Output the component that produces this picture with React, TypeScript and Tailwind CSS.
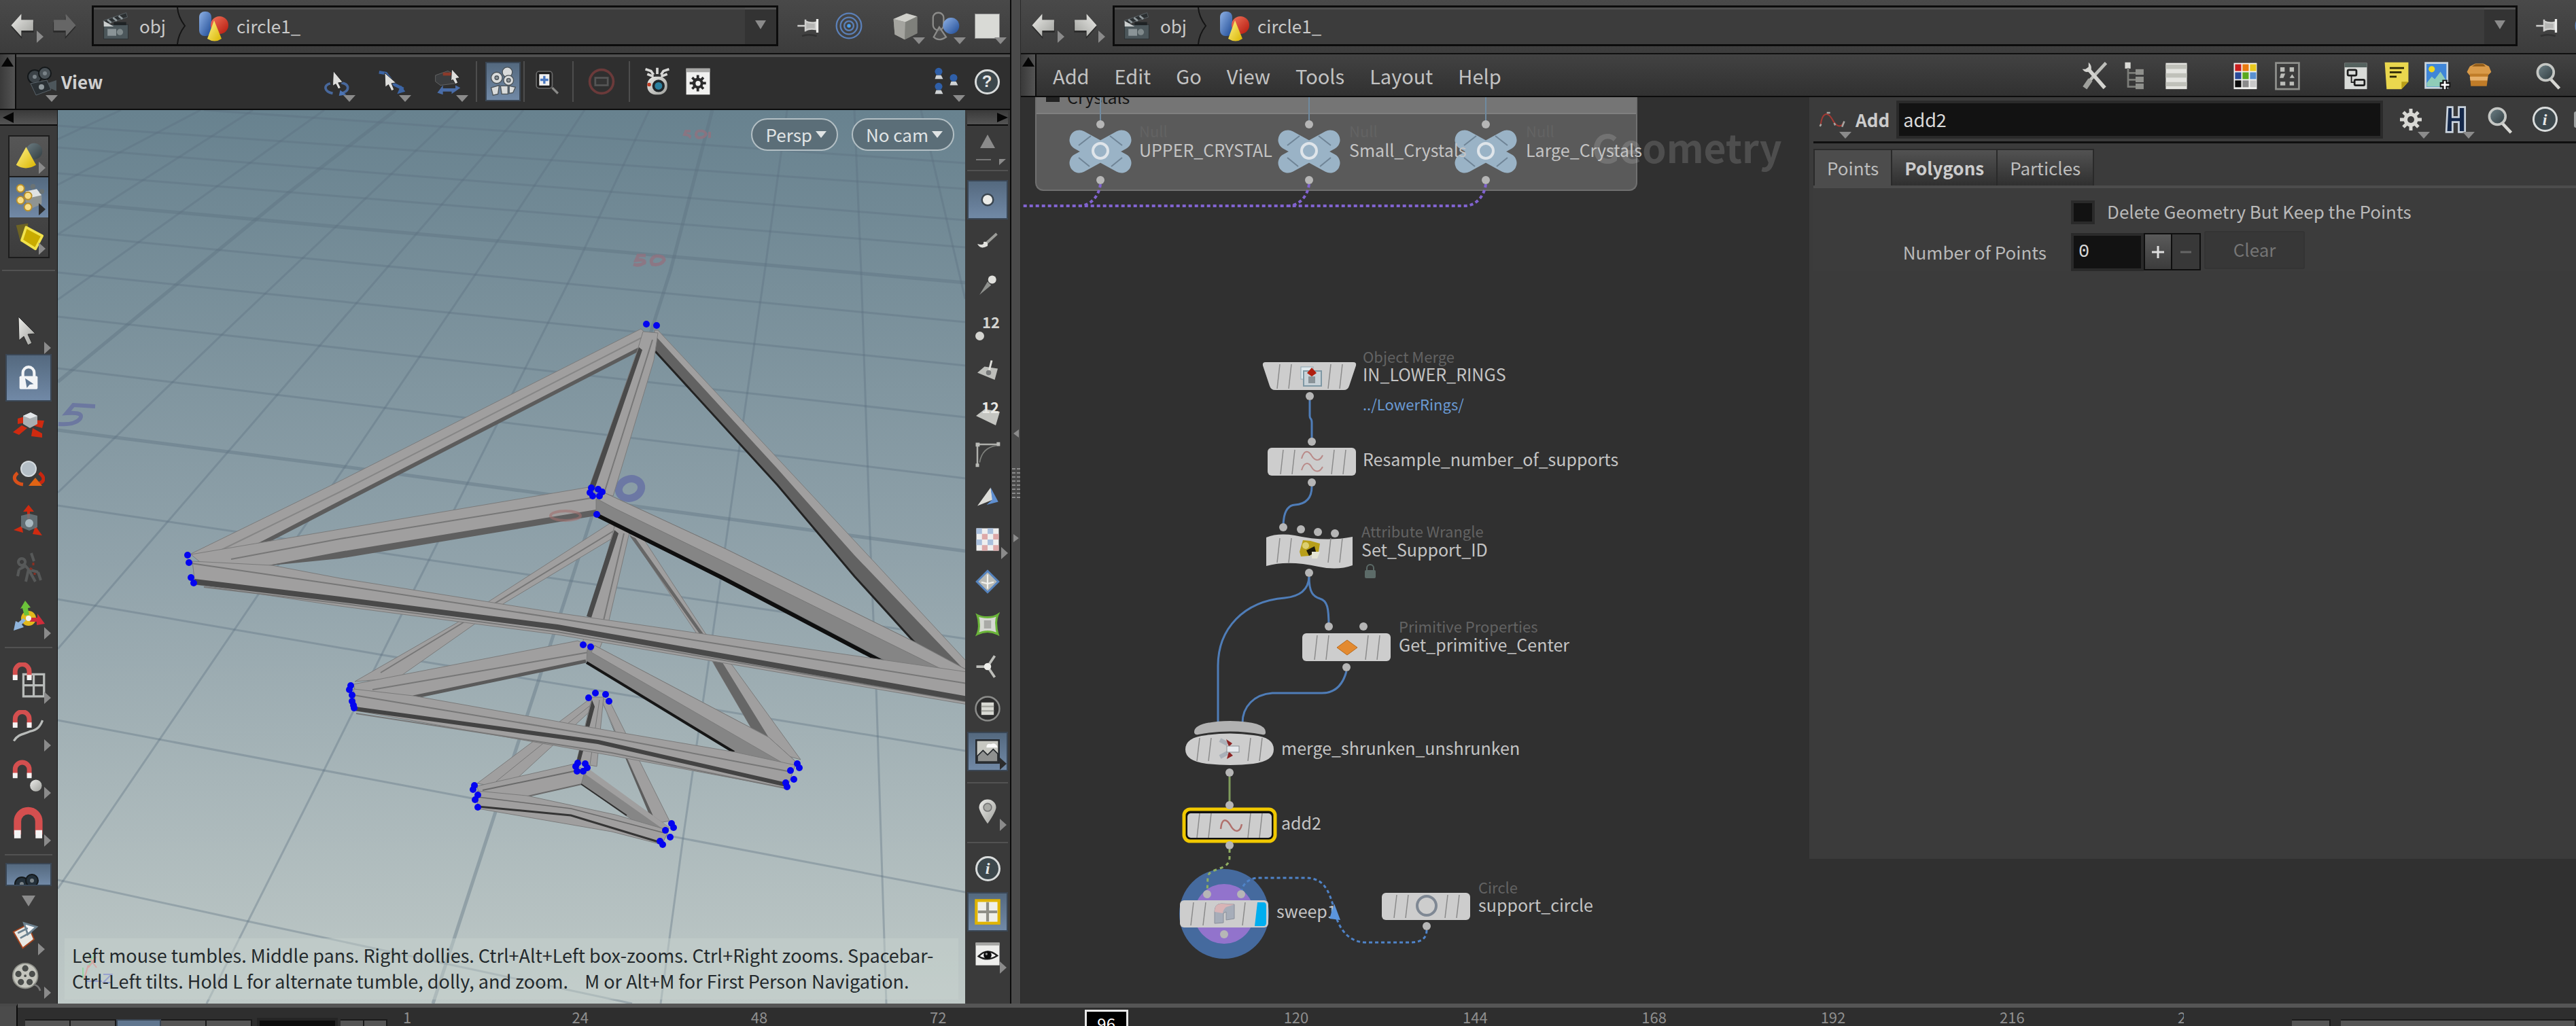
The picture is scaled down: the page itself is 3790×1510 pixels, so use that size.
import type { ReactNode } from "react";

/* ---------- shared pieces ---------- */

function SharedDefs() {
  return (
    <svg className="absolute h-0 w-0" aria-hidden="true">
      <defs>
        <linearGradient id="gLight" x1="0" y1="0" x2="1" y2="1">
          <stop offset="0" stopColor="#ecece9" />
          <stop offset="1" stopColor="#9fa09c" />
        </linearGradient>
        <linearGradient id="gBlue" x1="0" y1="0" x2="1" y2="1">
          <stop offset="0" stopColor="#8fb2e6" />
          <stop offset="1" stopColor="#1e4a94" />
        </linearGradient>
        <linearGradient id="gYellow" x1="0" y1="0" x2="1" y2="1">
          <stop offset="0" stopColor="#fff38a" />
          <stop offset="1" stopColor="#d9b400" />
        </linearGradient>
        <linearGradient id="gRed" x1="0" y1="0" x2="1" y2="1">
          <stop offset="0" stopColor="#f0745c" />
          <stop offset="1" stopColor="#b3180c" />
        </linearGradient>
        <linearGradient id="gSlate" x1="0" y1="0" x2="1" y2="1">
          <stop offset="0" stopColor="#6f8288" />
          <stop offset="1" stopColor="#2f3a3e" />
        </linearGradient>
      </defs>
    </svg>
  );
}

function Svg({ children, className = "size-11" }: { children: ReactNode; className?: string }) {
  return (
    <svg viewBox="0 0 48 48" className={`shrink-0 ${className}`} fill="none" aria-hidden="true">
      {children}
    </svg>
  );
}

function Tri({ dir, className, dark }: { dir: "down" | "right"; className: string; dark?: boolean }) {
  const fill = dark ? "#2c2c2c" : "#8b8b8b";
  return dir === "down" ? (
    <svg viewBox="0 0 18 10" className={`absolute h-[10px] w-[18px] ${className}`} aria-hidden="true">
      <path d="M0 0H18L9 10Z" fill={fill} />
    </svg>
  ) : (
    <svg viewBox="0 0 10 18" className={`absolute h-[18px] w-[10px] ${className}`} aria-hidden="true">
      <path d="M0 0V18L10 9Z" fill={fill} />
    </svg>
  );
}

function Tool({ label, className, children }: { label: string; className: string; children: ReactNode }) {
  return (
    <button type="button" aria-label={label} className={`relative flex shrink-0 items-center justify-center ${className}`}>
      {children}
    </button>
  );
}

/* ---------- icons ---------- */

const ArrowLeft = ({ flip, dim }: { flip?: boolean; dim?: boolean }) => (
  <Svg className={flip ? "size-[42px] -scale-x-100" : "size-[42px]"}>
    <path d="M4 26L22 8V18H42V35H22V46Z" fill="#000" opacity=".35" />
    <path d="M4 23L21 4V14H41V32H21V42Z" fill={dim ? "#666666" : "url(#gLight)"} />
  </Svg>
);

const Clapper = () => (
  <Svg>
    <path d="M3 16L40 3L42 10L6 22Z" fill="#2b2f31" stroke="#5b6468" />
    <path d="M10 14l6 5M19 11l6 5M28 8l6 5" stroke="#8f989b" strokeWidth="3" />
    <rect x="4" y="22" width="39" height="23" fill="#4c575b" stroke="#2a2f31" />
    <path d="M4 16L20 25H4Z" fill="#c9cdcd" />
    <path d="M20 18h20v5H20z" fill="#1f2325" />
    <rect x="10" y="29" width="14" height="11" fill="#8a9497" />
    <circle cx="30" cy="34" r="5" fill="#7f898b" />
  </Svg>
);

const Blobs = () => (
  <Svg className="size-12">
    <rect x="3" y="3" width="18" height="36" rx="8" fill="url(#gBlue)" />
    <circle cx="33" cy="23" r="13" fill="url(#gRed)" />
    <path d="M25 16L36 43Q26 50 15 43Z" fill="url(#gYellow)" />
  </Svg>
);

const Pin = () => (
  <Svg className="size-10">
    <path d="M4 24H18M18 13V34M18 16Q26 20 36 18V30Q26 28 18 32Z" stroke="#d0d0ce" strokeWidth="3" fill="#b5b5b3" />
    <path d="M39 12V36" stroke="#eeeeec" strokeWidth="4" />
    <path d="M12 42Q24 38 38 42" stroke="#222" strokeWidth="3" opacity=".5" />
  </Svg>
);

const Target = () => (
  <Svg>
    <circle cx="24" cy="24" r="20" stroke="#5b80b8" strokeWidth="2.5" />
    <circle cx="24" cy="24" r="13.500" stroke="#5b80b8" strokeWidth="2.5" />
    <circle cx="24" cy="24" r="7.500" stroke="#5b80b8" strokeWidth="2.5" />
    <circle cx="24" cy="24" r="3" fill="#4aa0f0" />
  </Svg>
);

const Cube = () => (
  <Svg>
    <path d="M5 13L26 4L43 9V36L23 46L7 38Z" fill="#8d8d88" />
    <path d="M5 13L26 4L43 9L24 18Z" fill="#cfcfca" />
    <path d="M5 13L24 18L23 46L7 38Z" fill="#a4a49f" />
    <path d="M24 18L43 9V36L23 46Z" fill="#7f807b" />
  </Svg>
);

const Shapes = () => (
  <Svg>
    <rect x="3" y="3" width="17" height="28" rx="8" stroke="#8c8c8a" strokeWidth="2.500" />
    <circle cx="32" cy="24" r="13" fill="url(#gBlue)" />
    <path d="M13 26L24 42Q12 50 4 42Z" stroke="#8c8c8a" strokeWidth="2.500" fill="#55555599" />
  </Svg>
);

const FilmCamera = ({ dark }: { dark?: boolean }) => (
  <Svg className="size-12">
    <circle cx="14" cy="17" r="10" fill={dark ? "#24303a" : "#3b4247"} stroke="#14181a" strokeWidth="2" />
    <circle cx="29" cy="12" r="9" fill={dark ? "#24303a" : "#4a5257"} stroke="#14181a" strokeWidth="2" />
    <circle cx="14" cy="17" r="3" fill="#7a8388" />
    <circle cx="29" cy="12" r="3" fill="#7a8388" />
    <path d="M8 27L32 22L38 36L16 44Z" fill="#2a3034" stroke="#59636a" />
    <path d="M34 26L46 22V38L37 34Z" fill="#4d565b" />
    <circle cx="24" cy="32" r="4" fill="#8f989c" />
  </Svg>
);

const Tumble = () => (
  <Svg>
    <path d="M14 27C3 30 4 40 18 43M32 26C45 28 46 39 32 43" stroke="#48689c" strokeWidth="4" />
    <path d="M30 38L40 45L28 47Z" fill="#4c74b4" />
    <path d="M19 7L34 25L27 26L31 34L27 36L23 28L18 31Z" fill="#dededc" stroke="#222" />
  </Svg>
);
const PanTool = () => (
  <Svg>
    <path d="M3 9L14 11L28 29L42 36" stroke="#3d65a4" strokeWidth="5" />
    <path d="M32 44L45 40L38 30Z" fill="#3d65a4" />
    <path d="M12 10L30 26L23 27L27 37L23 39L18 29L13 33Z" fill="#dededc" stroke="#222" />
  </Svg>
);
const DollyTool = () => (
  <Svg>
    <path d="M4 14L24 7L36 14V27L12 30L4 24Z" fill="#3b3d3f" stroke="#666" />
    <path d="M16 12h14" stroke="#8c3a2a" strokeWidth="5" />
    <path d="M7 42L16 30V35H36V30L44 34L30 44V40H16V45Z" fill="#4a6da8" />
    <path d="M30 4L43 18L37 19L40 26L36 28L32 21L29 23Z" fill="#dededc" stroke="#222" />
  </Svg>
);
const Walk = () => (
  <Svg>
    <g fill="#d9dbdb" stroke="#4b5358" strokeWidth="1.500">
      <circle cx="31" cy="9" r="8" />
      <circle cx="14" cy="18" r="9" />
      <circle cx="33" cy="22" r="8" />
      <circle cx="14" cy="18" r="3" fill="#8d9498" />
      <circle cx="33" cy="22" r="3" fill="#8d9498" />
      <path d="M5 34L18 30L16 44L8 46Z" />
      <path d="M20 31H32V44H22Z" />
      <path d="M34 31L44 33L40 42L34 43Z" />
    </g>
  </Svg>
);
const ZoomBox = () => (
  <Svg className="size-10">
    <rect x="5" y="6" width="28" height="30" rx="5" fill="#1f1f1f" stroke="#6b6b6b" strokeWidth="2" />
    <rect x="10" y="11" width="18" height="20" fill="#f0f0f0" />
    <path d="M19 14V28M12 21H26" stroke="#4a78c0" strokeWidth="4" />
    <path d="M33 35L43 45" stroke="#8a8a88" strokeWidth="4" />
  </Svg>
);
const NoEntry = () => (
  <Svg>
    <circle cx="24" cy="24" r="19" stroke="#6b3a3a" strokeWidth="4" />
    <rect x="14" y="18" width="20" height="12" fill="#333" stroke="#555" strokeWidth="3" />
  </Svg>
);
const PhotoCamera = () => (
  <Svg>
    <path d="M5 4l9 3 4 6M43 4l-9 3-4 6M24 2V12M8 12l10 4M40 12l-10 4" stroke="#d8d8d6" strokeWidth="4" />
    <rect x="8" y="16" width="32" height="29" rx="13" fill="url(#gLight)" />
    <circle cx="26" cy="31" r="10" fill="#20262a" />
    <circle cx="26" cy="31" r="6" fill="#2b7f9e" />
    <circle cx="11" cy="29" r="3" fill="#c23b22" />
  </Svg>
);
const Gear = ({ color = "#2b2b2b" }: { color?: string }) => (
  <g stroke={color} strokeWidth="5">
    <path d="M24 8V40M8 24H40M13 13L35 35M35 13L13 35" />
    <circle cx="24" cy="24" r="8" fill="none" strokeWidth="5" />
  </g>
);
const GearPanel = () => (
  <Svg>
    <rect x="5" y="3" width="38" height="42" fill="#f1f1ef" />
    <rect x="5" y="3" width="38" height="6" fill="#a9a9a7" />
    <g transform="translate(4 7) scale(.82)">
      <Gear />
    </g>
    <circle cx="24" cy="27" r="4" fill="#f1f1ef" />
  </Svg>
);
const People = () => (
  <Svg>
    {[
      [12, 6],
      [36, 16],
      [12, 30],
    ].map(([x, y]) => (
      <g key={`${x}-${y}`}>
        <circle cx={x} cy={y + 2} r="6" fill="#2f5fa8" />
        <path d={`M${x - 6} ${y + 14}H${x + 7}L${x + 4} ${y + 8}H${x - 4}Z`} fill="#cfd2d4" />
      </g>
    ))}
  </Svg>
);
const Badge = ({ char, italic }: { char: string; italic?: boolean }) => (
  <span
    className={`flex size-[37px] items-center justify-center rounded-full border-[3px] border-[#d9dcdc] bg-[#3c474c] text-[24px] leading-[24px] font-bold text-[#e6e8e8] ${
      italic ? "font-['Liberation_Serif'] italic" : "font-['Liberation_Sans']"
    }`}
  >
    {char}
  </span>
);
const Magnifier = () => (
  <Svg>
    <path d="M28 30L42 45" stroke="#d8d8d4" strokeWidth="5" />
    <circle cx="20" cy="19" r="13" fill="url(#gSlate)" stroke="#c5c7c4" strokeWidth="4" />
  </Svg>
);

/* left shelf icons */
const SelectObjects = () => (
  <Svg>
    <circle cx="32" cy="16" r="13" fill="url(#gSlate)" opacity=".9" />
    <path d="M19 9L35 38Q18 48 3 38Z" fill="url(#gYellow)" />
  </Svg>
);
const SelectPoints = () => (
  <Svg>
    <path d="M18 14L36 10L44 22V34L26 42L18 30Z" fill="#8f9492" />
    <path d="M18 14L36 10L44 20L26 24Z" fill="#dfe2e2" />
    {[
      [10, 9],
      [22, 21],
      [10, 28],
      [22, 39],
    ].map(([x, y]) => (
      <circle key={`${x}-${y}`} cx={x} cy={y} r="6" fill="#f6de8a" stroke="#b98f2a" strokeWidth="2" />
    ))}
    <circle cx="30" cy="6" r="4" fill="#6b7375" />
    <circle cx="44" cy="14" r="4" fill="#6b7375" />
  </Svg>
);
const SelectPrims = () => (
  <Svg>
    <path d="M3 5L22 2V30L10 32Z" fill="#8a7a10" opacity=".6" />
    <path d="M19 8L45 22L34 43L12 29Z" fill="#c9ab00" stroke="#f2e34c" strokeWidth="4" strokeLinejoin="round" />
  </Svg>
);
const SelectCursor = () => (
  <Svg className="size-12">
    <path d="M9 4L34 29L23 30L29 43L23 46L17 33L10 39Z" fill="url(#gLight)" stroke="#2c2c2c" />
  </Svg>
);
const SecureLock = () => (
  <Svg className="size-10">
    <path d="M14 22V15a10 10 0 0 1 20 0V22" stroke="#f2f4f6" strokeWidth="5" />
    <rect x="8" y="21" width="32" height="23" rx="2" fill="#f2f4f6" />
    <path d="M18 25L33 35L26 36L21 42Z" fill="#5f7691" />
  </Svg>
);
const MoveTool = () => (
  <Svg className="size-12">
    <path d="M8 14L22 10L20 20L8 22ZM28 16L47 17L44 28L30 24ZM1 34L14 24L22 28L10 38ZM30 28L44 36V42L28 40Z" fill="#cf2a10" />
    <path d="M16 10L27 5L37 10V22L26 28L16 22Z" fill="#a9afb2" />
    <path d="M16 10L27 5L37 10L26 14Z" fill="#e3e7ea" />
  </Svg>
);
const RotateTool = () => (
  <Svg className="size-12">
    <path d="M8 24C-2 32 6 40 16 41" stroke="#d8501a" strokeWidth="5" />
    <path d="M40 24C50 32 46 38 38 40" stroke="#c8260f" strokeWidth="5" />
    <path d="M24 43L34 31L44 43Z" fill="#e06414" />
    <circle cx="24" cy="18" r="11" fill="#b4bec6" stroke="#d4dade" strokeWidth="2" />
  </Svg>
);
const ScaleTool = () => (
  <Svg className="size-12">
    <path d="M24 1L32 11H16ZM22 11h4v10h-4zM2 38L14 32L16 42ZM34 32L44 46L30 44Z" fill="#cf2a10" />
    <path d="M13 17L25 14L37 17V34L25 39L13 34Z" fill="#6a787e" opacity=".85" />
    <circle cx="25" cy="28" r="6" fill="#a9b9c0" />
  </Svg>
);
const PoseTool = () => (
  <Svg className="size-12">
    <path
      d="M28 2L32 14M14 10a5 5 0 1 0 .1 0M17 18L24 26L20 44M24 26L38 30M10 26L18 22M10 26L8 36M24 26L34 44M38 30L42 42"
      stroke="#575959"
      strokeWidth="4"
    />
    <path d="M31 16v4M26 24l3 2M33 31v3" stroke="#8a2f22" strokeWidth="3" />
  </Svg>
);
const HandlesTool = () => (
  <Svg className="size-12">
    <circle cx="24" cy="28" r="11" fill="#e2b91c" />
    <path d="M18 24L15 13L12 14L19 2L27 12L23 13L25 23Z" fill="#6cc23a" />
    <path d="M26 27L37 27V21L48 36L36 38V33H26Z" fill="#d02c3a" />
    <path d="M20 31L14 37L17 41L2 46L5 32L9 34L16 28Z" fill="#8fb4dc" />
    <circle cx="24" cy="28" r="4" fill="#f3f3ee" />
  </Svg>
);
const MagnetShape = () => (
  <>
    <path d="M6 32V20a12 12 0 0 1 24 0V32" stroke="#d44f4f" strokeWidth="8" />
    <path d="M6 26V35M30 26V35" stroke="#f4f4f4" strokeWidth="8" />
  </>
);
const MagnetGrid = () => (
  <Svg className="size-13">
    <path d="M17 16H45V46H17ZM31 16V46M17 31H45" stroke="#b9bcba" strokeWidth="3" />
    <g transform="translate(1 -4) scale(.8)">
      <MagnetShape />
    </g>
  </Svg>
);
const MagnetCurve = () => (
  <Svg className="size-13">
    <g transform="translate(1 -4) scale(.8)">
      <MagnetShape />
    </g>
    <path d="M4 42C10 32 18 33 26 29C36 27 40 22 43 14" stroke="#b9bcba" strokeWidth="3" />
  </Svg>
);
const MagnetPoint = () => (
  <Svg className="size-13">
    <g transform="translate(1 0) scale(.8)">
      <MagnetShape />
    </g>
    <circle cx="34" cy="38" r="8" fill="url(#gLight)" />
  </Svg>
);
const MagnetBig = () => (
  <Svg className="size-13">
    <path d="M9 40V22a14 14 0 0 1 29 0V40" stroke="#d44f4f" strokeWidth="10" />
    <path d="M9 34V45M38 34V45" stroke="#f4f4f4" strokeWidth="9" />
  </Svg>
);
const Card = () => (
  <Svg>
    <path d="M3 18L26 6L36 30L18 44Z" fill="#e8e8e4" stroke="#a4441e" strokeWidth="2" />
    <path d="M10 20L26 12M14 28L32 18M20 4L40 10L26 22Z" stroke="#6d8290" strokeWidth="3" fill="#f4f6f8" />
  </Svg>
);
const Reel = () => (
  <Svg>
    <circle cx="22" cy="22" r="20" fill="#c4c5bd" stroke="#8d8f88" strokeWidth="2" />
    <g fill="#4a4d4b">
      <circle cx="22" cy="10" r="5" />
      <circle cx="11" cy="19" r="5" />
      <circle cx="33" cy="19" r="5" />
      <circle cx="15" cy="32" r="5" />
      <circle cx="29" cy="32" r="5" />
      <circle cx="22" cy="22" r="2" />
    </g>
    <path d="M36 36Q44 38 46 46" stroke="#777" strokeWidth="3" />
  </Svg>
);

/* display option icons */
const DotIcon = () => (
  <Svg className="size-10">
    <circle cx="24" cy="24" r="10" fill="#ecece8" stroke="#3b4650" strokeWidth="3" />
  </Svg>
);
const BrushIcon = () => (
  <Svg className="size-9">
    <path d="M20 28L42 8" stroke="#9b9c98" strokeWidth="5" />
    <path d="M4 28Q10 40 24 32Q26 22 16 24Q18 32 4 28Z" fill="#e2e2de" />
  </Svg>
);
const NormalIcon = () => (
  <Svg className="size-9">
    <path d="M8 44L24 18L31 25Z" fill="#8f918e" />
    <circle cx="33" cy="14" r="8" fill="#e0e0dc" />
  </Svg>
);
const PointNumbers = () => (
  <span className="relative block h-10 w-9">
    <span className="absolute top-0 left-[10px] text-[22px] leading-[24px] font-bold text-[#d4d4d0]">12</span>
    <span className="absolute bottom-0 left-0 size-[13px] rounded-full bg-[#d4d4d0]" />
  </span>
);
const PrimNormal = () => (
  <Svg className="size-9">
    <path d="M4 30L18 18L44 22L38 44Z" fill="#bdbeba" />
    <path d="M26 30L32 6" stroke="#e0e0dc" strokeWidth="4" />
    <circle cx="26" cy="30" r="5" fill="#77797a" />
  </Svg>
);
const PrimNumbers = () => (
  <span className="relative block h-10 w-9">
    <svg viewBox="0 0 36 40" className="absolute inset-0 h-10 w-9" aria-hidden="true">
      <path d="M1 26L14 16L36 20L30 40Z" fill="#c4c5c1" />
    </svg>
    <span className="absolute top-0 left-[9px] text-[22px] leading-[24px] font-bold text-[#e8e8e4]">12</span>
  </span>
);
const HullIcon = () => (
  <Svg className="size-10">
    <path d="M6 5V44M6 6H44" stroke="#aeafab" strokeWidth="3" />
    <path d="M10 38Q14 12 40 8" stroke="#7d7f7b" strokeWidth="2" />
    <path d="M3 3h7v7H3zM40 2h6v7h-6zM3 40h6v6H3z" fill="#b9bab6" />
  </Svg>
);
const PrismIcon = () => (
  <Svg className="size-9">
    <path d="M4 42L30 6L34 30Z" fill="#dcdcd8" />
    <path d="M30 6L45 34L22 40L33 30Z" fill="#5f8fd0" />
  </Svg>
);
const CheckerIcon = () => (
  <Svg className="size-9">
    <rect x="2" y="2" width="44" height="44" fill="#efefef" />
    {[0, 1, 2, 3].map((r) =>
      [0, 1, 2, 3].map((c) =>
        (r + c) % 2 === 0 ? (
          <rect key={`${r}-${c}`} x={2 + c * 11} y={2 + r * 11} width="11" height="11" fill={r % 2 ? "#dda9a9" : "#a9bfdd"} />
        ) : null,
      ),
    )}
  </Svg>
);
const DiamondIcon = () => (
  <Svg className="size-9">
    <path d="M24 3L45 24L24 45L3 24Z" fill="#b9bab5" stroke="#5583bd" strokeWidth="4" />
    <path d="M24 10L24 38M12 25L24 28L36 25" stroke="#f2f2ee" strokeWidth="3" />
  </Svg>
);
const GreenBox = () => (
  <Svg className="size-9">
    <path
      d="M4 6Q12 10 24 10Q36 10 44 5Q40 14 41 24Q41 34 44 43Q34 38 24 38Q14 38 4 43Q8 34 7 24Q7 14 4 6Z"
      fill="#d6d8d2"
      stroke="#6bb53a"
      strokeWidth="4"
    />
    <rect x="17" y="16" width="14" height="16" fill="#a9aaa6" />
  </Svg>
);
const SpokesIcon = () => (
  <Svg className="size-9">
    <path d="M2 24H24M24 24L38 3M24 24L38 45" stroke="#bdbeba" strokeWidth="5" />
    <circle cx="24" cy="24" r="7" fill="#efefeb" />
  </Svg>
);
const ListCircle = () => (
  <Svg className="size-10">
    <circle cx="24" cy="24" r="21" stroke="#8b8c8a" strokeWidth="3" fill="#2e2e2e" />
    <rect x="13" y="13" width="22" height="22" fill="#d9dad4" />
    <path d="M13 20H35M13 28H35" stroke="#a8a9a3" strokeWidth="3" />
  </Svg>
);
const PictureIcon = () => (
  <Svg className="size-10">
    <rect x="4" y="4" width="40" height="40" fill="#c6c7c1" stroke="#23272b" strokeWidth="3" />
    <path d="M6 32L16 22L24 30L34 20L42 28V42H6Z" fill="#8f9190" stroke="#23272b" strokeWidth="2" />
    <path d="M22 17Q22 9 30 11Q38 7 42 17Z" fill="#fafafa" />
  </Svg>
);
const MarkerIcon = () => (
  <Svg className="size-10">
    <path d="M24 46Q9 24 9 17a15 14 0 0 1 30 0Q39 24 24 46Z" fill="url(#gLight)" />
    <circle cx="24" cy="17" r="7" fill="#a9aaa6" stroke="#777" strokeWidth="2" />
  </Svg>
);
const QuadIcon = () => (
  <Svg className="size-10">
    <rect x="4" y="4" width="40" height="40" fill="#efefe8" stroke="#e0b400" strokeWidth="5" />
    <path d="M24 7V41M7 24H41" stroke="#8f8f86" strokeWidth="5" />
  </Svg>
);
const EyeIcon = () => (
  <Svg className="size-10">
    <rect x="3" y="4" width="42" height="40" fill="#eeeeec" />
    <rect x="3" y="4" width="42" height="5" fill="#a5a5a3" />
    <path d="M8 28Q24 12 41 27Q24 38 8 28Z" fill="#fff" stroke="#222" strokeWidth="3" />
    <circle cx="24" cy="26" r="7" fill="#0c0c0c" />
    <circle cx="22" cy="24" r="2" fill="#999" />
  </Svg>
);

/* network menu icons */
const Wrench = () => (
  <Svg>
    <path d="M42 4L16 32" stroke="#bdbeba" strokeWidth="5" />
    <path d="M17 31L8 44" stroke="#9fa09c" strokeWidth="8" />
    <path d="M12 12L40 44" stroke="#d4d4d0" strokeWidth="6" />
    <path d="M4 14Q10 22 18 16Q20 8 14 3V11L9 14Z" fill="#d4d4d0" />
  </Svg>
);
const TreeIcon = () => (
  <Svg>
    <rect x="7" y="3" width="9" height="10" fill="#dadad6" />
    <path d="M12 12V42H26M12 20H26M12 31H26" stroke="#7c7d79" strokeWidth="3" />
    <rect x="24" y="14" width="13" height="9" fill="#8f908c" />
    <rect x="24" y="26" width="13" height="9" fill="#8f908c" />
    <rect x="24" y="37" width="13" height="9" fill="#8f908c" />
  </Svg>
);
const ListIcon = () => (
  <Svg>
    <rect x="7" y="4" width="34" height="42" fill="#e4e4e0" />
    <path d="M7 10H41M7 24H41M7 38H41" stroke="#c0c1ba" strokeWidth="7" />
  </Svg>
);
const swatches = ["#c81e1e", "#e87a10", "#e8c81e", "#2a4a98", "#5aa81e", "#5a90d0", "#0c0c0c", "#8a8a8a", "#c8c8c8"];
const PaletteIcon = () => (
  <Svg>
    <rect x="6" y="4" width="37" height="42" fill="#f4f4f2" />
    {swatches.map((c, i) => (
      <rect key={c} x={8 + (i % 3) * 12} y={6 + Math.floor(i / 3) * 13} width="10" height="11" fill={c} />
    ))}
  </Svg>
);
const ShapesPalette = () => (
  <Svg>
    <rect x="6" y="4" width="37" height="42" fill="#3c3c3c" stroke="#8f908c" strokeWidth="3" />
    <path d="M13 11h7v7h-7zM28 11h7v7h-7zM14 21h7l-3 7h-6zM28 28l4-6 4 6zM13 34h8v6h-8zM28 34h7v6h-7z" fill="#bcbdb9" />
  </Svg>
);
const NetIcon = () => (
  <Svg>
    <rect x="6" y="4" width="36" height="42" fill="#d9dbd8" />
    <rect x="6" y="4" width="36" height="7" fill="#55625f" />
    <rect x="11" y="15" width="14" height="9" rx="2" stroke="#1d1d1d" strokeWidth="3" />
    <rect x="22" y="31" width="16" height="9" rx="2" stroke="#1d1d1d" strokeWidth="3" />
    <path d="M17 25V35H22" stroke="#1d1d1d" strokeWidth="2" />
  </Svg>
);
const NoteIcon = () => (
  <Svg>
    <path d="M5 3H43V34L32 46H8Z" fill="#ead74e" />
    <path d="M43 34H32V46Z" fill="#b99f18" />
    <path d="M13 12H36M13 19H32M13 26H24" stroke="#2b2606" strokeWidth="3" />
  </Svg>
);
const AddImageIcon = () => (
  <Svg>
    <rect x="5" y="4" width="35" height="40" fill="#3f86d8" stroke="#c9d4dc" strokeWidth="3" />
    <circle cx="15" cy="14" r="5" fill="#f0d81e" />
    <path d="M7 36L15 26L20 30L29 18L38 32V42H7Z" fill="#8fccb8" />
    <path d="M36 31V47M28 39H45" stroke="#111" strokeWidth="8" />
    <path d="M36 33V46M30 39H43" stroke="#fff" strokeWidth="3" />
  </Svg>
);
const BoxIcon = () => (
  <Svg className="size-10">
    <path d="M8 8L18 3H32L42 8L46 18L40 24H8L3 18Z" fill="#d99a48" />
    <path d="M8 21H41L38 43H10Z" fill="#c07c28" />
    <path d="M8 26H40L39 33H9Z" fill="#e6b06a" />
    <path d="M12 8H36L32 4H18Z" fill="#8f5a18" />
  </Svg>
);
const CurveIcon = () => (
  <Svg className="size-10">
    <path d="M3 34C6 10 16 10 24 24C30 36 40 40 44 28" stroke="#a23a34" strokeWidth="2.500" />
    <path d="M2 36l2-4M14 12h6M27 30l2 4M41 37l4-10" stroke="#a5a6a2" strokeWidth="3" />
  </Svg>
);

/* ---------- chrome ---------- */

function PathBar({ forward, children }: { forward: boolean; children: ReactNode }) {
  return (
    <div className="flex h-[80px] shrink-0 items-start border-b-2 border-[#101010] bg-gradient-to-b from-[#494949] to-[#3c3c3c] pt-2">
      <Tool label="Back" className="ml-1 h-[60px] w-[60px]">
        <ArrowLeft />
        <Tri dir="right" className="right-0 bottom-[5px]" />
      </Tool>
      <Tool label="Forward" className="mr-[11px] h-[60px] w-[60px]">
        <ArrowLeft flip dim={!forward} />
        {forward && <Tri dir="right" className="right-0 bottom-[5px]" />}
      </Tool>
      <nav
        aria-label="Path"
        className="flex h-[60px] min-w-0 flex-1 items-stretch border-[3px] border-[#0c0c0c] bg-[#3c3c3c] shadow-[inset_0_3px_0_#4f4f4f]"
      >
        <a href="#obj" className="flex items-center gap-3 pl-[11px] text-[26px] leading-[32px] text-[#c9c9c9]">
          <Clapper />
          <span>obj</span>
        </a>
        <svg viewBox="0 0 14 54" className="ml-4 h-full w-[14px]" preserveAspectRatio="none" fill="none" aria-hidden="true">
          <path d="M1 0Q2 14 12 27Q2 40 1 54" stroke="#141414" strokeWidth="2" />
        </svg>
        <a href="#circle1" className="flex items-center gap-[10px] pl-4 text-[26px] leading-[32px] text-[#c9c9c9]">
          <Blobs />
          <span>circle1_</span>
        </a>
        <button
          type="button"
          aria-label="Path history"
          className="ml-auto flex w-[46px] items-center justify-center bg-[#333333] shadow-[inset_0_3px_0_#555555]"
        >
          <svg viewBox="0 0 16 13" className="mb-1 h-[13px] w-4" aria-hidden="true">
            <path d="M0 0H16L8 13Z" fill="#8b8b8b" />
          </svg>
        </button>
      </nav>
      {children}
    </div>
  );
}

function CollapseTab({ className }: { className: string }) {
  return (
    <button
      type="button"
      aria-label="Collapse toolbar"
      className={`flex shrink-0 justify-center border-r-2 border-[#0c0c0c] bg-gradient-to-r from-[#3a3a3a] to-[#545454] ${className}`}
    >
      <svg viewBox="0 0 18 14" className="mt-1 h-[14px] w-[18px]" aria-hidden="true">
        <path d="M9 0L18 14H0Z" fill="#050505" />
      </svg>
    </button>
  );
}

const VRule = ({ className }: { className: string }) => <span className={`h-[60px] w-[2px] shrink-0 bg-[#4d4d4d] ${className}`} />;
const HRule = ({ className }: { className: string }) => <span className={`block h-[2px] shrink-0 bg-[#525252] ${className}`} />;

const activeBtn = "border-2 border-[#3a4654] bg-gradient-to-b from-[#54697f] to-[#7189a6]";

function ViewToolbar() {
  return (
    <div className="flex h-[82px] shrink-0 items-center border-b-2 border-[#0c0c0c] bg-[#2f2f2f] shadow-[inset_0_4px_0_#4f4f4f]">
      <CollapseTab className="h-full w-6" />
      <Tool label="View tool" className="ml-2 h-full w-[58px]">
        <FilmCamera />
        <Tri dir="down" className="right-[5px] bottom-[10px]" />
      </Tool>
      <span className="w-[364px] text-[26px] leading-[32px] font-bold text-[#d0d0d0]">View</span>
      <Tool label="Tumble" className="h-full w-[82px]">
        <Tumble />
        <Tri dir="down" className="right-[13px] bottom-[10px]" />
      </Tool>
      <Tool label="Pan" className="h-full w-[82px]">
        <PanTool />
        <Tri dir="down" className="right-[13px] bottom-[10px]" />
      </Tool>
      <Tool label="Dolly" className="h-full w-[82px]">
        <DollyTool />
        <Tri dir="down" className="right-[11px] bottom-[10px]" />
      </Tool>
      <VRule className="" />
      <Tool label="Walk" className={`mx-3 h-[58px] w-[52px] ${activeBtn}`}>
        <Walk />
      </Tool>
      <VRule className="-ml-2" />
      <Tool label="Box zoom" className="h-full w-[66px]">
        <ZoomBox />
      </Tool>
      <VRule className="ml-1" />
      <Tool label="Stop" className="h-full w-[81px]">
        <NoEntry />
      </Tool>
      <VRule className="" />
      <Tool label="Snapshot" className="ml-[10px] h-full w-[60px]">
        <PhotoCamera />
      </Tool>
      <Tool label="Render settings" className="h-full w-[60px]">
        <GearPanel />
      </Tool>
      <Tool label="Visualizers" className="ml-auto h-full w-[60px]">
        <People />
        <Tri dir="down" className="right-[2px] bottom-[10px]" />
      </Tool>
      <Tool label="Help" className="mr-1 h-full w-[60px]">
        <Badge char="?" />
      </Tool>
    </div>
  );
}

function LeftShelf() {
  const tools: [string, ReactNode, boolean, boolean][] = [
    ["Select", <SelectCursor key="c" />, true, false],
    ["Secure selection", <SecureLock key="l" />, false, true],
    ["Move", <MoveTool key="m" />, false, false],
    ["Rotate", <RotateTool key="r" />, false, false],
    ["Scale", <ScaleTool key="s" />, false, false],
    ["Pose", <PoseTool key="p" />, false, false],
    ["Handles", <HandlesTool key="h" />, true, false],
  ];
  const snaps: [string, ReactNode][] = [
    ["Grid snapping", <MagnetGrid key="g" />],
    ["Curve snapping", <MagnetCurve key="c" />],
    ["Point snapping", <MagnetPoint key="p" />],
    ["Snapping", <MagnetBig key="b" />],
  ];
  return (
    <div className="flex w-[85px] shrink-0 flex-col border-r border-[#161616] bg-[#3a3a3a]">
      <button
        type="button"
        aria-label="Collapse shelf"
        className="flex h-[23px] items-center border-b-2 border-[#0c0c0c] bg-gradient-to-b from-[#3a3a3a] to-[#545454] pl-1"
      >
        <svg viewBox="0 0 16 16" className="size-4" aria-hidden="true">
          <path d="M16 0V16L0 8Z" fill="#050505" />
        </svg>
      </button>
      <div className="mt-[14px] ml-3 w-[61px] border-2 border-[#1d1d1d] bg-gradient-to-b from-[#565656] to-[#3c3c3c]">
        <Tool label="Select objects" className="h-[58px] w-full">
          <SelectObjects />
          <Tri dir="right" className="right-1 bottom-[3px]" />
        </Tool>
        <Tool label="Select points" className="h-[61px] w-full border-t-2 border-[#1d1d1d] bg-gradient-to-b from-[#54697f] to-[#7189a6]">
          <SelectPoints />
          <Tri dir="right" dark className="right-1 bottom-[3px]" />
        </Tool>
        <Tool label="Select primitives" className="h-[58px] w-full">
          <SelectPrims />
          <Tri dir="right" className="right-1 bottom-[3px]" />
        </Tool>
      </div>
      <HRule className="mx-[3px] mt-[17px]" />
      <div className="mt-[52px] flex flex-col">
        {tools.map(([label, icon, tri, active]) => (
          <Tool key={label} label={label} className={active ? `mx-2 h-[70px] ${activeBtn}` : "h-[70px] w-full"}>
            {icon}
            {tri && <Tri dir="right" className="right-[9px] bottom-0" />}
          </Tool>
        ))}
      </div>
      <HRule className="mx-[7px] mt-[11px]" />
      <div className="mt-[12px] flex flex-col">
        {snaps.map(([label, icon]) => (
          <Tool key={label} label={label} className="h-[70px] w-full">
            {icon}
            <Tri dir="right" className="right-[9px] bottom-0" />
          </Tool>
        ))}
      </div>
      <HRule className="mx-[7px] mt-[11px]" />
      <button
        type="button"
        aria-label="View mode"
        className={`mx-2 mt-[11px] flex h-[34px] items-start justify-center overflow-hidden pt-[12px] ${activeBtn}`}
      >
        <FilmCamera dark />
      </button>
      <button type="button" aria-label="More tools" className="flex h-[44px] items-center justify-center">
        <svg viewBox="0 0 20 16" className="h-4 w-5" aria-hidden="true">
          <path d="M0 0H20L10 16Z" fill="#8b8b8b" />
        </svg>
      </button>
      <Tool label="Flipbook" className="h-[58px] w-[78px]">
        <Card />
        <Tri dir="right" className="right-[12px] bottom-0" />
      </Tool>
      <Tool label="Render" className="h-[64px] w-[78px]">
        <Reel />
        <Tri dir="right" className="right-[3px] bottom-0" />
      </Tool>
    </div>
  );
}

function DisplayOptions() {
  const opts: [string, ReactNode, boolean, boolean][] = [
    ["Points", <DotIcon key="1" />, true, false],
    ["Point normals", <BrushIcon key="2" />, false, false],
    ["Point trails", <NormalIcon key="3" />, false, false],
    ["Point numbers", <PointNumbers key="4" />, false, false],
    ["Primitive normals", <PrimNormal key="5" />, false, false],
    ["Primitive numbers", <PrimNumbers key="6" />, false, false],
    ["Hulls", <HullIcon key="7" />, false, false],
    ["Shading", <PrismIcon key="8" />, false, false],
    ["Textures", <CheckerIcon key="9" />, false, true],
    ["Materials", <DiamondIcon key="10" />, false, false],
    ["Bounds", <GreenBox key="11" />, false, false],
    ["Origin", <SpokesIcon key="12" />, false, false],
    ["List", <ListCircle key="13" />, false, false],
    ["Background image", <PictureIcon key="14" />, true, true],
  ];
  return (
    <div className="flex w-[66px] shrink-0 flex-col bg-[#3a3a3a] px-[3px]">
      <button
        type="button"
        aria-label="Collapse options"
        className="flex h-[23px] items-center justify-end border-b-2 border-[#0c0c0c] bg-gradient-to-b from-[#3a3a3a] to-[#545454]"
      >
        <svg viewBox="0 0 16 14" className="h-[14px] w-4" aria-hidden="true">
          <path d="M0 0V14L16 7Z" fill="#050505" />
        </svg>
      </button>
      <button type="button" aria-label="Scroll up" className="flex h-[65px] flex-col items-center pt-[13px]">
        <svg viewBox="0 0 54 48" className="h-12 w-[54px]" aria-hidden="true">
          <path d="M27 0L38 20H16Z" fill="#8b8b8b" />
          <path d="M10 37H32" stroke="#777" strokeWidth="2" />
          <path d="M44 36H54L44 45Z" fill="#8b8b8b" />
        </svg>
      </button>
      <HRule className="" />
      <div className="mt-[13px] flex h-[870px] flex-col justify-between">
        {opts.map(([label, icon, active, tri]) => (
          <Tool key={label} label={label} className={active ? `h-[58px] w-full ${activeBtn}` : "h-[58px] w-full"}>
            {icon}
            {tri && <Tri dir="right" dark={active} className="right-0 bottom-0" />}
          </Tool>
        ))}
      </div>
      <HRule className="mt-4" />
      <Tool label="Markers" className="mt-3 h-[58px] w-full">
        <MarkerIcon />
        <Tri dir="right" className="right-[2px] bottom-0" />
      </Tool>
      <HRule className="mt-4" />
      <Tool label="Info" className="mt-2 h-[58px] w-full">
        <Badge char="i" italic />
      </Tool>
      <Tool label="Layout" className={`mt-[6px] h-[58px] w-full ${activeBtn}`}>
        <QuadIcon />
      </Tool>
      <Tool label="Visibility" className="mt-1 h-[58px] w-full">
        <EyeIcon />
        <Tri dir="right" className="right-[2px] bottom-0" />
      </Tool>
    </div>
  );
}

/* ---------- 3D viewport ---------- */

const gridLines = [
  "M300 162L1420 240", "M85 185L1420 278", "M85 217L1420 324", "M85 255L1420 364", "M85 345L1420 474", "M85 401L1420 538",
  "M85 466L1420 614", "M85 542L1420 704", "M85 744L1420 940", "M85 882L563 964L1420 1105", "M85 1060L695 1175L1420 1313",
  "M85 1295L365 1356L930 1477", "M85 205L178 162", "M85 272L295 162", "M85 345L372 162", "M85 441L477 162",
  "M85 725L327 492L675 162", "M85 955L471 508L770 162", "M85 1308L344 928L702 400L860 162", "M304 1477L476 1135L591 904L844 400L955 162",
  "M972 1477L1005 1233L1039 1000L1125 400L1158 162", "M1304 1477L1289 1010L1280 788L1267 400L1257 162", "M1420 440L1355 162",
];
const majorLines = ["M85 297L1420 416", "M85 633L500 686L1420 811", "M85 562L191 475L424 284L582 162", "M637 1477L729 1195L841 853L986 400L1048 162"];

const dots = [
  [951, 477], [966, 479], [870, 718], [880, 720], [886, 724], [868, 725], [872, 730], [882, 730], [878, 757],
  [276, 817], [278, 828], [281, 850], [285, 858],
  [858, 949], [869, 952], [516, 1009], [514, 1015], [518, 1023], [518, 1032], [521, 1042], [520, 1038],
  [1173, 1124], [1176, 1130], [1163, 1134], [1168, 1147], [1156, 1152], [1158, 1158],
  [866, 1027], [876, 1020], [891, 1022], [896, 1032], [850, 1123], [861, 1124], [864, 1130], [847, 1128], [849, 1135], [858, 1135],
  [698, 1156], [696, 1162], [703, 1170], [699, 1177], [703, 1188],
  [988, 1212], [991, 1218], [979, 1222], [986, 1232], [971, 1238], [975, 1243],
];

function Face({ d, fill = "#a09f9f" }: { d: string; fill?: string }) {
  return <path d={d} fill={fill} stroke="#7b7b7b" strokeWidth="1" />;
}

function Scene() {
  return (
    <svg
      viewBox="85 162 1335 1315"
      preserveAspectRatio="xMidYMid slice"
      className="absolute inset-0 h-full w-full"
      fill="none"
      role="img"
      aria-label="Truss geometry"
    >
      <g stroke="#5c7080" strokeOpacity=".36" strokeWidth="3">
        {gridLines.map((d) => (
          <path key={d} d={d} />
        ))}
      </g>
      <g stroke="#5c7080" strokeOpacity=".4" strokeWidth="5">
        {majorLines.map((d) => (
          <path key={d} d={d} />
        ))}
      </g>
      <ellipse cx="927" cy="719" rx="17" ry="14" stroke="#6c78a4" strokeWidth="11" transform="rotate(-20 927 719)" />
      <path d="M140 598L108 596L98 608Q124 606 118 616Q110 626 86 624" stroke="#6c78a0" strokeWidth="6" />
      <g stroke="#94707e" strokeOpacity=".75" strokeWidth="5">
        <path d="M950 376H939L936 383Q950 381 948 387Q940 392 932 389M964 377Q955 382 960 389Q972 391 977 383Q977 376 964 377" />
        <path d="M1016 193H1009L1007 198Q1018 199 1014 203M1026 193Q1021 200 1028 203Q1038 202 1039 197Q1036 191 1026 193M1044 203V194" strokeWidth="4" />
      </g>

      {/* smallest truss */}
      <Face d="M702 1153L866 1030L882 1034L745 1160Z" />
      <path d="M730 1150L876 1032" stroke="#777" />
      <Face d="M884 1028L896 1030L985 1208L965 1212Z" />
      <path d="M884 1030L957 1203L966 1212L888 1040Z" fill="#5c5c5c" />
      <Face d="M871 1026L888 1026L878 1128L848 1122Z" />
      <path d="M871 1030L848 1122L853 1124L875 1040Z" fill="#424242" />
      <path d="M882 1030L868 1125" stroke="#777" />
      <Face d="M702 1157L846 1124L860 1134L856 1154L772 1173L705 1172Z" />
      <path d="M710 1163L854 1133M772 1173L856 1154" stroke="#6a6a6a" strokeWidth="2" />
      <Face d="M862 1132L985 1218L975 1234L920 1200L855 1154Z" fill="#868686" />
      <path d="M864 1130L985 1218L978 1222L862 1140Z" fill="#a09f9f" />
      <path d="M855 1154L922 1200" stroke="#2e2e2e" strokeWidth="2" />
      <Face d="M702 1164L775 1171L905 1199L984 1222L974 1243L900 1224L703 1190Z" />
      <path d="M703 1173L840 1190L978 1226" stroke="#6a6a6a" strokeWidth="1.500" />
      <path d="M703 1187L840 1200L972 1240" stroke="#353535" strokeWidth="3" />

      {/* middle truss */}
      <Face d="M522 1003L670 918L721 884L901 768L908 788L743 887L689 925L585 998Z" />
      <path d="M560 990L700 905L905 780" stroke="#777" strokeWidth="2" />
      <Face d="M926 785L948 795L1037 931L1078 980L1178 1118L1150 1110L1116 1090L1052 980L1024 931Z" />
      <path d="M926 788L1028 931L1052 980L1116 1090L1140 1100L1066 980L1040 940L935 792Z" fill="#666666" />
      <Face d="M904 775L928 775L892 930L882 955L856 950Z" />
      <path d="M904 780L863 907L870 909L910 785Z" fill="#4a4a4a" />
      <path d="M918 785L884 930" stroke="#777" strokeWidth="2" />
      <Face d="M520 1007L850 943L876 955L862 974L608 1027L525 1026Z" />
      <path d="M548 1015L866 960" stroke="#777" strokeWidth="2" />
      <path d="M608 1026L862 973" stroke="#5a5a5a" strokeWidth="5" />
      <Face d="M875 950L1131 1085L1172 1122L1160 1150L1079 1108L863 974L864 956Z" fill="#858585" />
      <path d="M875 950L1131 1085L1172 1122L1164 1130L870 960Z" fill="#a09f9f" stroke="#7b7b7b" />
      <path d="M863 975L1080 1107" stroke="#161616" strokeWidth="4" />
      <Face d="M520 1014L608 1024L900 1076L1082 1107L1170 1126L1158 1160L900 1112L524 1046Z" />
      <path d="M520 1023L900 1086L1164 1136M524 1050L900 1108L1155 1160" stroke="#777" strokeWidth="2" />
      <path d="M522 1043L880 1092L1157 1155" stroke="#434343" strokeWidth="6" />

      {/* largest truss */}
      <Face d="M281 815L500 708L943 484L952 492L940 513L500 741L375 802L300 828Z" />
      <path d="M375 802L500 737L940 511L938 518L500 744L380 806Z" fill="#5c5c5c" />
      <path d="M320 812L500 724L944 497" stroke="#868686" strokeWidth="2" />
      <Face d="M963 486L968 486L1289 830L1430 982V1005L1346 946L1257 846L1144 712L1081 643L963 515Z" />
      <path d="M964 494L1144 690L1257 817L1415 982L1346 946L1257 846L1144 712L1081 643L964 516Z" fill="#626262" />
      <path d="M964 517L1081 645L1144 714L1257 848L1346 946" stroke="#222222" strokeWidth="3" />
      <Face d="M946 488L968 490L962 530L902 730L866 720L938 515Z" />
      <path d="M940 511L866 720L874 722L945 515Z" fill="#4a4a4a" />
      <path d="M960 500L890 722" stroke="#777" strokeWidth="2" />
      <Face d="M281 816L866 717L886 735L877 757L390 833L300 832Z" />
      <path d="M390 833L500 812L877 750V759L500 822Z" fill="#5f5f5f" />
      <path d="M340 823L500 793L876 732" stroke="#777" strokeWidth="2" />
      <ellipse cx="832" cy="759" rx="22" ry="7" stroke="#a0706e" strokeOpacity=".6" strokeWidth="4" />
      <Face d="M891 726L1068 808L1346 945L1430 990V1015L1310 976L1169 902L1062 847L877 757V735Z" fill="#858585" />
      <path d="M891 726L1068 808L1346 945L1430 990V1000L1400 992L1068 828L904 748L878 734Z" fill="#a09f9f" stroke="#777" />
      <path d="M878 758L1062 850L1169 906L1300 975" stroke="#0f0f0f" strokeWidth="6" />
      <Face d="M283 826L400 832L500 851L820 902L1430 990V1038L820 934L500 892L287 860Z" />
      <path d="M281 829L500 861L820 910L1430 1007M300 864L500 888L820 930L1430 1034" stroke="#777" strokeWidth="2" />
      <path d="M286 856L500 882L820 923L1430 1030" stroke="#494949" strokeWidth="8" />
      <g fill="#0404f0">
        {dots.map(([x, y], i) => (
          <circle key={i} cx={x} cy={y} r="5" />
        ))}
      </g>
      <g strokeWidth="2">
        <path d="M124 1440L130 1420" stroke="#e08080" />
        <path d="M122 1440V1424M130 1405l5 8m4-10l-8 18" stroke="#70d880" />
        <path d="M130 1408l12 16m0-16l-12 16" stroke="#e08080" />
        <path d="M128 1444H150M152 1434h12l-12 12h12" stroke="#7078d0" />
      </g>
    </svg>
  );
}

const pill =
  "flex h-[48px] items-center gap-[5px] rounded-full border-2 border-[#b3bfc4] bg-[#5b6e78] pr-[15px] pl-[19px] text-[26px] leading-[32px] text-[#e0e4e5]";
const PillTri = () => (
  <svg viewBox="0 0 16 10" className="h-[10px] w-4" aria-hidden="true">
    <path d="M0 0H16L8 10Z" fill="#e0e4e5" />
  </svg>
);

function Viewport() {
  return (
    <section
      aria-label="Viewport"
      className="relative flex min-w-0 flex-1 flex-col justify-between overflow-hidden bg-gradient-to-b from-[#68828f] via-[#90a2aa] to-[#bfc9c7]"
    >
      <Scene />
      <div className="relative flex justify-end gap-5 pt-3 pr-4">
        <button type="button" className={pill}>
          Persp
          <PillTri />
        </button>
        <button type="button" className={pill}>
          No cam
          <PillTri />
        </button>
      </div>
      <p className="relative mx-[10px] mb-[6px] bg-[#c8d2cf]/45 pt-[6px] pb-[8px] pl-[11px] text-[27px] leading-[38px] whitespace-nowrap text-[#23292c]">
        Left mouse tumbles. Middle pans. Right dollies. Ctrl+Alt+Left box-zooms. Ctrl+Right zooms. Spacebar-
        <br />
        Ctrl-Left tilts. Hold L for alternate tumble, dolly, and zoom.&nbsp;&nbsp;&nbsp; M or Alt+M for First Person Navigation.
      </p>
    </section>
  );
}

/* ---------- network editor ---------- */

const ORIGIN_X = 1502;
const ORIGIN_Y = 143;

type Label = { x: number; y: number; text: string; kind: "name" | "type" | "path" };
const labels: Label[] = [
  { x: 1676, y: 193, text: "Null", kind: "type" },
  { x: 1676, y: 221, text: "UPPER_CRYSTAL", kind: "name" },
  { x: 1985, y: 193, text: "Null", kind: "type" },
  { x: 1985, y: 221, text: "Small_Crystals", kind: "name" },
  { x: 2245, y: 193, text: "Null", kind: "type" },
  { x: 2245, y: 221, text: "Large_Crystals", kind: "name" },
  { x: 2005, y: 525, text: "Object Merge", kind: "type" },
  { x: 2005, y: 551, text: "IN_LOWER_RINGS", kind: "name" },
  { x: 2005, y: 595, text: "../LowerRings/", kind: "path" },
  { x: 2005, y: 676, text: "Resample_number_of_supports", kind: "name" },
  { x: 2003, y: 782, text: "Attribute Wrangle", kind: "type" },
  { x: 2003, y: 809, text: "Set_Support_ID", kind: "name" },
  { x: 2058, y: 922, text: "Primitive Properties", kind: "type" },
  { x: 2058, y: 949, text: "Get_primitive_Center", kind: "name" },
  { x: 1885, y: 1101, text: "merge_shrunken_unshrunken", kind: "name" },
  { x: 1885, y: 1211, text: "add2", kind: "name" },
  { x: 1878, y: 1341, text: "sweep1", kind: "name" },
  { x: 2175, y: 1306, text: "Circle", kind: "type" },
  { x: 2175, y: 1332, text: "support_circle", kind: "name" },
];
const labelStyle = {
  name: "text-[25px] text-[#c4c4c4]",
  type: "text-[22px] text-[#636363]",
  path: "text-[22px] text-[#6b9bd4]",
};

const ports = [
  [1927, 583], [1930, 650], [1930, 710], [1888, 776], [1914, 779], [1939, 783], [1964, 785], [1926, 843], [1955, 922], [2006, 922],
  [1981, 982], [1809, 1137], [1809, 1185], [1809, 1244], [1776, 1316], [1826, 1316], [1801, 1375], [2099, 1363],
];

function Stripes({ x, y, h = 36, right = true }: { x: number; y: number; h?: number; right?: boolean }) {
  const at = right ? [20, 37, 95, 112] : [18, 36, 94];
  return (
    <g stroke="#8a8a8a" strokeWidth="1.500">
      {at.map((o) => (
        <path key={o} d={`M${x + o + 2} ${y}L${x + o - 2} ${y + h}`} />
      ))}
    </g>
  );
}

function Body({ x, y, w = 130, h = 41 }: { x: number; y: number; w?: number; h?: number }) {
  return <rect x={x} y={y} width={w} height={h} rx="6" fill="#cdcdcd" />;
}

function NullNode({ x }: { x: number }) {
  return (
    <g>
      <path d={`M${x} 143V178`} stroke="#6f8aa0" strokeWidth="2" />
      <g stroke="#9ab3c6" strokeWidth="29" strokeLinecap="round">
        <path d={`M${x - 31} 206L${x + 31} 240M${x + 31} 206L${x - 31} 240`} />
      </g>
      <path
        d={`M${x - 14} 200L${x - 32} 214M${x + 14} 200L${x + 32} 214M${x - 32} 232L${x - 16} 245M${x + 32} 232L${x + 16} 245`}
        stroke="#6f8496"
        strokeWidth="2"
      />
      <circle cx={x} cy="222" r="11" fill="#9ab3c6" stroke="#dfe5ea" strokeWidth="4" />
      <circle cx={x} cy="183" r="6" fill="#b6b6b6" />
      <circle cx={x} cy="265" r="6" fill="#b6b6b6" />
    </g>
  );
}

function NetworkDrawing() {
  return (
    <svg viewBox="1502 143 1160 1334" className="absolute top-0 left-0 h-[1334px] w-[1160px]" fill="none" aria-hidden="true">
      {/* Crystals network box contents */}
      <g stroke="#8163d0" strokeWidth="4" strokeDasharray="5 4">
        <path d="M2186 271C2184 288 2172 303 2155 303H1505" />
        <path d="M1926 271C1924 288 1912 303 1895 303" />
        <path d="M1619 271C1617 288 1605 303 1588 303" />
      </g>
      <NullNode x={1619} />
      <NullNode x={1926} />
      <NullNode x={2186} />

      <circle cx="1801" cy="1345" r="66" fill="#456a9e" />
      <circle cx="1801" cy="1345" r="44" fill="#9273cc" />

      <g stroke="#4f7db8" strokeWidth="3">
        <path d="M1927 589V612C1927 618 1930 614 1930 622V650" />
        <path d="M1930 716C1930 735 1920 742 1905 743C1893 744 1888 755 1888 776" />
        <path d="M1926 849C1926 872 1932 878 1942 881C1953 884 1955 895 1955 922" />
        <path d="M1926 849C1925 870 1910 878 1890 880C1830 885 1792 925 1792 980V1064" />
        <path d="M1981 988C1975 1010 1962 1020 1945 1020H1872C1845 1022 1828 1040 1828 1064" />
      </g>
      <path d="M1809 1143V1185" stroke="#7f9c5c" strokeWidth="3" />
      <path d="M1809 1250V1262C1809 1282 1780 1276 1777 1290L1776 1316" stroke="#8fae62" strokeWidth="3" strokeDasharray="5 5" />
      <path
        d="M2099 1369C2099 1383 2088 1387 2075 1387H2010C1985 1387 1970 1368 1964 1343C1955 1305 1945 1292 1920 1292H1850C1836 1293 1826 1303 1826 1316"
        stroke="#4f83c8"
        strokeWidth="3"
        strokeDasharray="5 4"
      />

      {/* object merge */}
      <path d="M1862 533H1991Q1996 533 1995 538L1985 568Q1983 574 1977 574H1876Q1870 574 1868 568L1858 538Q1857 533 1862 533Z" fill="#cdcdcd" />
      <Stripes x={1861} y={536} />
      <rect x="1914" y="540" width="18" height="18" fill="#dfe8ec" stroke="#8fa8b4" />
      <rect x="1918" y="546" width="26" height="22" fill="#c8d2d8" stroke="#7f98a4" strokeWidth="2" />
      <path d="M1930 541L1937 549L1930 554L1923 549Z" fill="#b01f10" />
      <path d="M1925 554h10v10h-10z" fill="#8a9398" />

      {/* resample */}
      <Body x={1865} y={659} />
      <Stripes x={1866} y={662} />
      <path
        d="M1915 675C1919 660 1926 664 1930 671C1935 679 1942 679 1946 670M1915 692C1919 678 1926 681 1930 688C1935 696 1942 695 1946 687"
        stroke="#b98a88"
        strokeWidth="2"
      />

      {/* attribute wrangle */}
      <path d="M1863 791Q1880 784 1905 788Q1950 798 1990 790V832Q1968 840 1940 834Q1895 824 1863 833Z" fill="#cdcdcd" />
      <Stripes x={1861} y={792} />
      <path d="M1912 812L1917 795L1928 796L1942 800L1940 812L1926 818L1914 819Z" fill="#b89f1a" />
      <path d="M1922 810L1934 804L1936 812L1926 818Z" fill="#1c1a0c" />
      <path d="M1930 812L1942 812L1938 822L1930 822Z" fill="#e4e4d4" />
      <circle cx="1921" cy="803" r="5" fill="#dccf70" />

      {/* primitive properties */}
      <Body x={1916} y={932} />
      <Stripes x={1916} y={935} />
      <path d="M1982 942L1997 953L1982 964L1967 953Z" fill="#e38a30" stroke="#b86a1c" />

      {/* merge */}
      <path
        d="M1757 1078Q1756 1062 1810 1061Q1863 1062 1862 1078Q1862 1082 1857 1081Q1810 1072 1763 1081Q1758 1082 1757 1078Z"
        fill="#b2b2b2"
      />
      <path
        d="M1744 1103Q1744 1085 1775 1082Q1810 1077 1844 1082Q1874 1085 1874 1103Q1874 1120 1844 1124Q1810 1128 1775 1124Q1744 1120 1744 1103Z"
        fill="#cdcdcd"
      />
      <Stripes x={1743} y={1086} h={34} />
      <path d="M1795 1089L1806 1095M1806 1108L1795 1114" stroke="#aab0b8" strokeWidth="6" />
      <path d="M1804 1088l9 6-5 5zM1808 1106l6 6-9 5z" fill="#8c2424" />
      <rect x="1805" y="1098" width="18" height="9" fill="#e6eaee" stroke="#8a8f94" />

      {/* add2, selected */}
      <rect x="1742" y="1191" width="134" height="47" rx="9" fill="#111" stroke="#f0c800" strokeWidth="5" />
      <rect x="1747" y="1197" width="124" height="36" rx="5" fill="#cdcdcd" />
      <Stripes x={1743} y={1197} />
      <path d="M1796 1220C1798 1202 1805 1206 1810 1214C1815 1224 1824 1228 1827 1213" stroke="#b0706c" strokeWidth="2.500" />

      {/* sweep */}
      <Body x={1736} y={1325} h={40} />
      <path d="M1850 1328H1859Q1863 1328 1863 1333V1358Q1863 1363 1859 1363H1846Z" fill="#00aeef" />
      <Stripes x={1736} y={1328} h={34} right={false} />
      <path d="M1787 1342Q1787 1330 1797 1330L1816 1331V1352L1804 1354V1342L1800 1344V1358L1787 1359Z" fill="#a6adb9" stroke="#8a8f9a" />
      <path d="M1787 1342Q1787 1330 1797 1330L1816 1331L1804 1335Q1800 1338 1799 1344Z" fill="#d8b4b6" />

      {/* support circle */}
      <Body x={2033} y={1314} h={40} />
      <Stripes x={2033} y={1317} h={34} />
      <circle cx="2099" cy="1333" r="14" stroke="#7f8894" strokeWidth="4" />

      <g fill="#b6b6b6">
        {ports.map(([x, y]) => (
          <circle key={`${x}-${y}`} cx={x} cy={y} r="6" />
        ))}
      </g>

      {/* wrangle lock */}
      <path d="M2011 840V836a5 5 0 0 1 10 0V840" stroke="#5c6b68" strokeWidth="2" />
      <rect x="2008" y="839" width="16" height="12" rx="2" fill="#5c6b68" />
    </svg>
  );
}

function Network() {
  return (
    <section aria-label="Network" className="relative min-w-0 flex-1">
      <div className="absolute top-0 left-[21px] flex h-[138px] w-[886px] flex-col overflow-hidden rounded-b-[12px] border-2 border-t-0 border-[#707070] bg-[#5a5a5a]">
        <div className="flex h-[25px] shrink-0 items-start border-b-2 border-[#808080] bg-[#757575]">
          <span className="ml-[14px] h-[7px] w-[20px] bg-[#222222]" />
          <span className="-mt-[16px] ml-[11px] text-[25px] leading-[30px] text-[#171717]">Crystals</span>
        </div>
      </div>
      <span className="absolute top-[32px] left-[840px] text-[57px] leading-[80px] font-bold text-white/15">Geometry</span>
      <NetworkDrawing />
      {labels.map((l) => (
        <span
          key={`${l.x}-${l.y}`}
          className={`absolute leading-[28px] whitespace-nowrap ${labelStyle[l.kind]}`}
          style={{ left: l.x - ORIGIN_X, top: l.y - ORIGIN_Y - 15 }}
        >
          {l.text}
        </span>
      ))}
      <svg viewBox="0 0 20 26" className="absolute top-[1187px] left-[452px] h-[26px] w-5" aria-hidden="true">
        <path d="M9 0L18 24L2 22Z" fill="#5b95dd" />
      </svg>
    </section>
  );
}

/* ---------- parameter pane ---------- */

function Parameters() {
  const tab = "border-2 border-b-0 border-[#2a2a2a] px-[18px] text-[26px] leading-[52px]";
  return (
    <aside aria-label="Parameters" className="flex h-[84%] w-[49.3%] shrink-0 flex-col bg-[#3b3b3b] pl-[6px]">
      <div className="flex h-[68px] shrink-0 items-center border-b-[3px] border-[#0f0f0f]">
        <Tool label="Operator menu" className="h-full w-[56px]">
          <CurveIcon />
          <Tri dir="down" className="right-0 bottom-1" />
        </Tool>
        <label htmlFor="node-name" className="ml-[6px] text-[26px] leading-[32px] font-bold text-[#cccccc]">
          Add
        </label>
        <input
          id="node-name"
          defaultValue="add2"
          className="ml-[10px] h-[56px] min-w-0 flex-1 border-4 border-[#2a2a2a] bg-[#121212] pl-[6px] text-[27px] leading-[32px] text-[#dadada]"
        />
        <Tool label="Settings" className="ml-[9px] h-full w-[64px]">
          <Svg className="size-12">
            <Gear color="#d8d8d4" />
            <circle cx="24" cy="24" r="5" fill="#3b3b3b" />
          </Svg>
          <Tri dir="down" className="right-1 bottom-1" />
        </Tool>
        <Tool label="Node help" className="h-full w-[66px]">
          <Svg>
            <path d="M12 4H20V20H30V4H40V44H30V28H20V44H10Z" fill="#14284a" stroke="#c9d2dc" strokeWidth="3" />
          </Svg>
          <Tri dir="down" className="right-1 bottom-1" />
        </Tool>
        <Tool label="Find parameter" className="h-full w-[66px]">
          <Magnifier />
        </Tool>
        <Tool label="Node info" className="mr-[10px] h-full w-[66px]">
          <Badge char="i" italic />
        </Tool>
        <span className="h-6 w-[3px] rounded-l-full bg-[#9da0a0]" />
      </div>
      <div role="tablist" className="mt-2 flex shrink-0 border-b-4 border-[#4c4c4c]">
        <button type="button" role="tab" aria-selected="true" className={`${tab} bg-[#4c4c4c] text-[#bdbdbd]`}>
          Points
        </button>
        <button
          type="button"
          role="tab"
          aria-selected="false"
          className={`${tab} -ml-[2px] bg-gradient-to-b from-[#525252] to-[#303030] font-bold text-[#cccccc]`}
        >
          Polygons
        </button>
        <button type="button" role="tab" aria-selected="false" className={`${tab} -ml-[2px] bg-gradient-to-b from-[#525252] to-[#303030] text-[#bdbdbd]`}>
          Particles
        </button>
      </div>
      <div className="grid grid-cols-[343px_1fr] gap-x-9 gap-y-[13px] bg-[#3c3c3c] pt-[18px] text-[26px] leading-[32px] text-[#b9b9b9]">
        <span />
        <label className="flex items-start gap-[18px]">
          <input type="checkbox" className="size-[35px] appearance-none border-4 border-[#2a2a2a] bg-[#121212]" />
          Delete Geometry But Keep the Points
        </label>
        <label htmlFor="num-points" className="self-center text-right">
          Number of Points
        </label>
        <div className="flex">
          <input
            id="num-points"
            defaultValue="0"
            className="h-[56px] w-[107px] border-4 border-[#2a2a2a] bg-[#121212] pl-[7px] font-['Liberation_Mono'] text-[27px] leading-[32px] text-[#d6d6d6]"
          />
          <button
            type="button"
            aria-label="Add point"
            className="flex h-[55px] w-[42px] items-center justify-center border-2 border-[#0f0f0f] bg-gradient-to-b from-[#5a5a5a] to-[#3c3c3c]"
          >
            <svg viewBox="0 0 18 18" className="size-[18px]" aria-hidden="true">
              <path d="M9 0V18M0 9H18" stroke="#dedede" strokeWidth="3" />
            </svg>
          </button>
          <button
            type="button"
            aria-label="Remove point"
            className="-ml-[2px] flex h-[55px] w-[44px] items-center justify-center border-2 border-[#0f0f0f] bg-[#383838]"
          >
            <svg viewBox="0 0 18 18" className="size-[18px]" aria-hidden="true">
              <path d="M1 9H17" stroke="#666" strokeWidth="3" />
            </svg>
          </button>
          <button
            type="button"
            className="-mt-[3px] ml-[5px] h-[56px] w-[148px] rounded-[3px] border-2 border-[#343434] bg-[#373737] pb-[3px] text-[#757575]"
          >
            Clear
          </button>
        </div>
      </div>
    </aside>
  );
}

const menus = ["Add", "Edit", "Go", "View", "Tools", "Layout", "Help"];

function NetworkMenu() {
  return (
    <div className="flex h-[63px] shrink-0 items-center border-b-2 border-[#0c0c0c] bg-gradient-to-b from-[#424242] to-[#313131]">
      <CollapseTab className="h-full w-[23px]" />
      <div className="flex gap-[37px] pl-6 text-[29px] leading-[36px] text-[#c2c2c2]">
        {menus.map((m) => (
          <button key={m} type="button">
            {m}
          </button>
        ))}
      </div>
      <div className="ml-auto flex h-full pr-[10px]">
        <Tool label="Tools" className="h-full w-[60px]"><Wrench /></Tool>
        <Tool label="Tree" className="h-full w-[60px]"><TreeIcon /></Tool>
        <Tool label="List" className="h-full w-[60px]"><ListIcon /></Tool>
        <Tool label="Colors" className="ml-10 h-full w-[62px]"><PaletteIcon /></Tool>
        <Tool label="Shapes" className="h-full w-[62px]"><ShapesPalette /></Tool>
        <Tool label="Network box" className="ml-10 h-full w-[60px]"><NetIcon /></Tool>
        <Tool label="Sticky note" className="h-full w-[60px]"><NoteIcon /></Tool>
        <Tool label="Add image" className="h-full w-[60px]"><AddImageIcon /></Tool>
        <Tool label="Package" className="h-full w-[62px]"><BoxIcon /></Tool>
        <Tool label="Find node" className="ml-10 h-full w-[62px]"><Magnifier /></Tool>
      </div>
    </div>
  );
}

/* ---------- timeline ---------- */

const ticks = [24, 48, 72, 96, 120, 144, 168, 192, 216];

function Timeline() {
  const play = "h-[10px] border-t-2 border-r-2 border-[#1a1a1a] bg-[#555555]";
  return (
    <footer className="flex h-[33px] shrink-0 overflow-hidden bg-[#2e2e2e]">
      <div className="w-[26px] shrink-0 border-t-4 border-r-2 border-t-[#484848] border-r-[#0c0c0c] bg-[#4b4b4b]" />
      <div className="flex min-w-0 flex-1 border-t-[6px] border-[#555555]">
        <div className="flex w-[548px] shrink-0 items-end pl-[11px]">
          <button type="button" aria-label="First frame" className={`w-[67px] ${play}`} />
          <button type="button" aria-label="Play backward" className={`w-[67px] ${play}`} />
          <button type="button" aria-label="Stop" className="h-[10px] w-[66px] border-2 border-b-0 border-[#3a4654] bg-[#60768f]" />
          <button type="button" aria-label="Play" className={`w-[67px] ${play}`} />
          <button type="button" aria-label="Last frame" className={`w-[67px] ${play}`} />
          <input aria-label="Frame" className="ml-[7px] h-3 w-[119px] border-4 border-b-0 border-[#242424] bg-[#0c0c0c]" />
          <button type="button" aria-label="Previous key" className={`ml-1 w-[35px] ${play}`} />
          <button type="button" aria-label="Next key" className={`w-[34px] ${play}`} />
        </div>
        <ol className="flex min-w-0 flex-1 text-center text-[22px] leading-[26px] text-[#8f8f8f]">
          <li className="w-[50px] shrink-0">1</li>
          <li className="w-[98px] shrink-0" />
          {ticks.map((t) => (
            <li key={t} className="flex min-w-0 flex-1 justify-center">
              {t === 96 ? (
                <span className="mt-[3px] mr-8 h-[40px] w-[64px] border-[3px] border-[#e8e8e8] bg-black text-[24px] leading-[34px] text-white">96</span>
              ) : (
                <span>{t}</span>
              )}
            </li>
          ))}
          <li className="flex w-[121px] shrink-0 justify-end overflow-hidden">
            <span className="w-[9px] overflow-hidden text-left">2</span>
          </li>
        </ol>
        <div className="ml-[159px] flex w-[418px] shrink-0 items-end gap-[15px]">
          <button type="button" aria-label="Range" className={`w-[57px] ${play}`} />
          <button type="button" aria-label="Range slider" className={`flex-1 ${play}`} />
        </div>
      </div>
    </footer>
  );
}

export default function App() {
  return (
    <div className="flex h-screen flex-col overflow-hidden bg-[#303030] font-['Noto_Sans_CJK_SC',sans-serif]">
      <SharedDefs />
      <main className="grid min-h-0 flex-1 grid-cols-[1488fr_14px_2288fr]">
        <div className="flex min-h-0 min-w-0 flex-col border-r-2 border-[#0c0c0c]">
          <PathBar forward={false}>
            <Tool label="Pin" className="ml-[15px] h-[60px] w-[60px]"><Pin /></Tool>
            <Tool label="Link" className="h-[60px] w-[58px]"><Target /></Tool>
            <Tool label="Object display" className="ml-6 h-[60px] w-[60px]">
              <Cube />
              <Tri dir="down" className="right-[1px] bottom-[3px]" />
            </Tool>
            <Tool label="Geometry display" className="h-[60px] w-[60px]">
              <Shapes />
              <Tri dir="down" className="right-[1px] bottom-[3px]" />
            </Tool>
            <Tool label="Color scheme" className="mr-1 h-[60px] w-[60px]">
              <span className="size-[37px] border border-[#8a8a8a] bg-[#d9dad6]" />
              <Tri dir="down" className="right-[1px] bottom-[3px]" />
            </Tool>
          </PathBar>
          <ViewToolbar />
          <div className="flex min-h-0 flex-1">
            <LeftShelf />
            <Viewport />
            <DisplayOptions />
          </div>
        </div>
        <div className="flex flex-col items-center justify-center border-r border-[#2a2a2a] bg-[#4a4a4a]">
          <svg viewBox="0 0 12 170" className="mb-12 h-[170px] w-3" aria-hidden="true">
            <path d="M10 2V14L2 8ZM2 156V168L10 162Z" fill="#8b8b8b" />
            {[0, 1, 2, 3, 4, 5, 6, 7].map((i) => (
              <path key={i} d={`M0 ${60 + i * 6}h5M7 ${60 + i * 6}h5`} stroke="#8b8b8b" strokeWidth="2" />
            ))}
          </svg>
        </div>
        <div className="flex min-h-0 min-w-0 flex-col">
          <PathBar forward>
            <Tool label="Pin" className="ml-[14px] h-[60px] w-[60px]"><Pin /></Tool>
            <div className="flex h-[60px] w-[12px] shrink-0 items-center overflow-hidden pl-[8px]"><Target /></div>
          </PathBar>
          <NetworkMenu />
          <div className="flex min-h-0 flex-1">
            <Network />
            <Parameters />
          </div>
        </div>
      </main>
      <Timeline />
    </div>
  );
}
